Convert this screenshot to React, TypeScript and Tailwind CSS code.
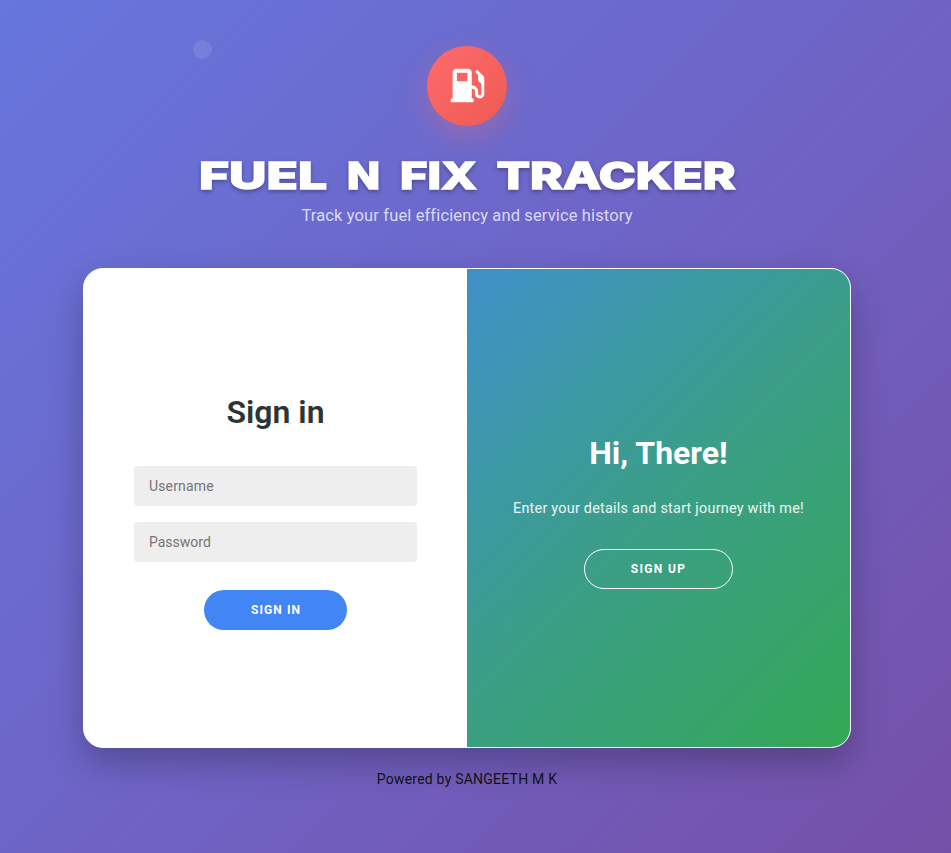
import { FaGasPump } from 'react-icons/fa6';

const titleWords = [
  { text: 'FUEL', x: 3, width: 128 },
  { text: 'N', x: 151, width: 33 },
  { text: 'FIX', x: 204, width: 77 },
  { text: 'TRACKER', x: 300.5, width: 239 },
];

function Brand() {
  return (
    <header className="flex flex-col items-center">
      <div className="flex h-20 w-20 items-center justify-center rounded-full bg-linear-135 from-[#ff6b6b] to-[#ee5a52] shadow-[0_10px_30px_rgba(255,107,107,0.3)]">
        <FaGasPump className="h-[34px] w-[34px] translate-x-[0.5px] -translate-y-[0.5px] text-white" />
      </div>
      <h1 className="mt-[27px] h-[48px]">
        <svg
          width="543"
          height="48"
          className="overflow-visible font-['Inter',sans-serif] text-[37px] font-extrabold drop-shadow-[0_2px_2px_rgba(0,0,0,0.3)]"
          fill="white"
          stroke="white"
          strokeWidth="1.4"
          strokeLinejoin="miter"
        >
          {titleWords.map((word) => (
            <text key={word.text} x={word.x} y="35.8" textLength={word.width} lengthAdjust="spacingAndGlyphs">
              {word.text}
            </text>
          ))}
        </svg>
      </h1>
      <p className="mt-[4px] text-[16.5px] leading-[22px] tracking-[0.13px] text-white/75">
        Track your fuel efficiency and service history
      </p>
    </header>
  );
}

function SignInForm() {
  return (
    <form className="flex w-[383px] flex-col items-center justify-center bg-white px-[50px] pt-[6px]">
      <h2 className="text-[32px] leading-[38px] font-semibold text-[#2d3436]">Sign in</h2>
      <input
        className="mt-[35px] h-10 w-full rounded bg-[#eee] px-[15px] pt-px text-[14px] tracking-[0.15px] placeholder-[#757575] outline-none"
        placeholder="Username"
      />
      <input
        type="password"
        className="mt-4 h-10 w-full rounded bg-[#eee] px-[15px] pt-px text-[14px] placeholder-[#757575] outline-none"
        placeholder="Password"
      />
      <button
        type="button"
        className="mt-7 h-10 w-[143px] rounded-full bg-[#4285f4] pl-px text-[12px] font-bold tracking-[1.1px] text-white"
      >
        SIGN IN
      </button>
    </form>
  );
}

function WelcomePanel() {
  return (
    <section className="flex flex-1 flex-col items-center justify-center bg-linear-135 from-[#4090c8] via-[#3b9e86] to-[#34a853] pt-[6px] text-white">
      <h2 className="text-[32px] leading-[38px] font-bold">Hi, There!</h2>
      <p className="mt-[27px] text-[14.4px] leading-5 tracking-[0.24px] text-white/90">
        Enter your details and start journey with me!
      </p>
      <button
        type="button"
        className="mt-[30px] h-10 w-[149px] rounded-full border border-white text-[12px] font-bold tracking-[1.35px]"
      >
        SIGN UP
      </button>
    </section>
  );
}

export default function App() {
  return (
    <div className="relative flex h-[853px] w-full flex-col items-center overflow-hidden bg-linear-135 from-[#6676dd] via-[#6e64c6] to-[#7550a8] pt-[46px] pr-[17px] font-['Roboto',sans-serif]">
      <span className="absolute top-[40px] left-[192.5px] h-[19px] w-[19px] rounded-full bg-white/10" />
      <Brand />
      <main className="mt-[41px] flex h-[480px] w-[768px] overflow-hidden rounded-[20px] border border-white bg-white shadow-[0_15px_35px_rgba(0,0,0,0.25)]">
        <SignInForm />
        <WelcomePanel />
      </main>
      <footer className="mt-[21px] text-[14px] leading-5 tracking-[0.23px] text-[#111]">Powered by SANGEETH M K</footer>
    </div>
  );
}
